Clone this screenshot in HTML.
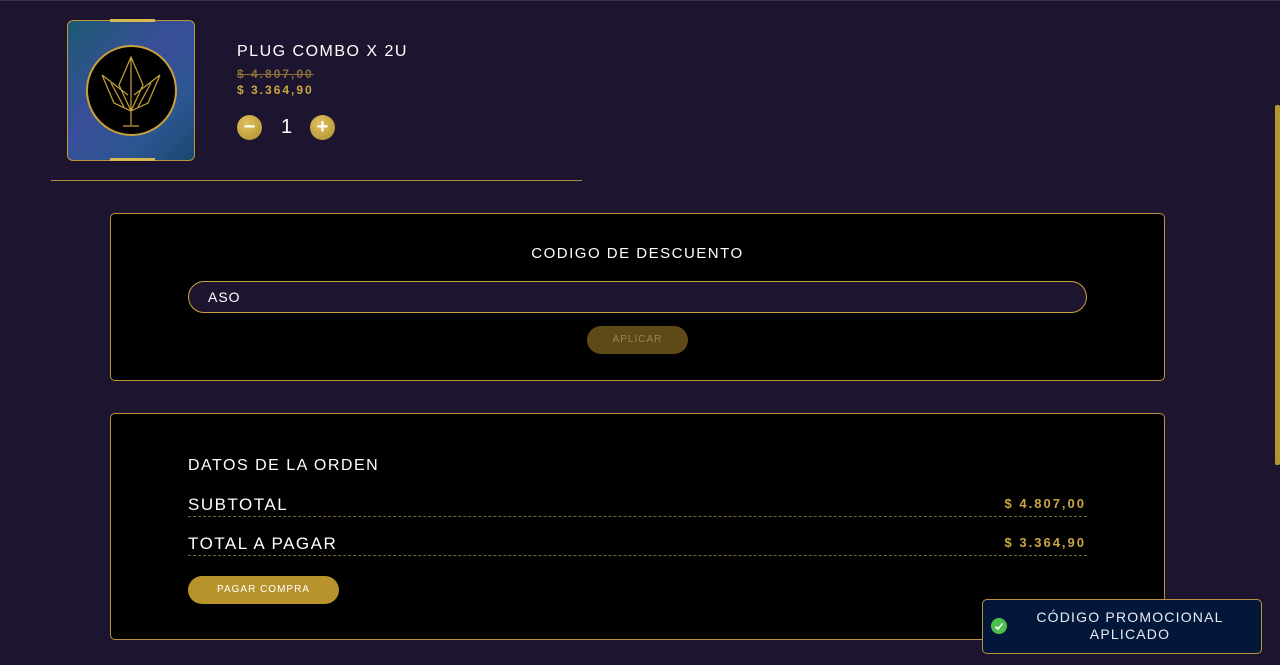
<!DOCTYPE html>
<html><head><meta charset="utf-8"><style>
*{box-sizing:border-box;margin:0;padding:0}
body{width:1280px;height:665px;overflow:hidden;background:#1d1530;font-family:"Liberation Sans",sans-serif;color:#fff;position:relative;letter-spacing:1px}
.abs{position:absolute}
.card{position:absolute;background:#000;border:1px solid #b8943a;border-radius:5px}
.gold{color:#c9a640}
</style></head><body>
<div class="abs" style="left:0;top:0;width:1280px;height:1px;background:#3a3350"></div>
<div class="abs" style="left:1275px;top:105px;width:5px;height:360px;background:#b8962f;border-radius:2px"></div>

<!-- product image -->
<div class="abs" style="left:67px;top:20px;width:128px;height:141px;border:1px solid #b8943a;border-radius:6px;background:linear-gradient(135deg,#1d5a73,#3a4e9a 45%,#2a5690 75%,#1a4670)"></div>
<div class="abs" style="left:110px;top:19px;width:45px;height:3px;background:#d8b850"></div>
<div class="abs" style="left:110px;top:158px;width:45px;height:3px;background:#d8b850"></div>
<div class="abs" style="left:86px;top:45px;width:91px;height:91px;border-radius:50%;background:#000;border:2px solid #c9a23a"></div>
<svg class="abs" style="left:86px;top:45px" width="91" height="91" viewBox="0 0 91 91" fill="none" stroke="#c9a23a" stroke-width="1.2">
<path d="M45 12 L33 40 L45 66 L57 40 Z M45 12 L45 66 M16 30 L28 58 L45 66 M74 30 L62 58 L45 66 M16 30 L42 50 M74 30 L48 50 M25 38 L38 62 M65 38 L52 62 M45 66 L45 80 M37 81 L53 81"/>
</svg>

<div class="abs" style="left:237px;top:43px;font-size:16px;letter-spacing:1.5px">PLUG COMBO X 2U</div>
<div class="abs gold" style="left:237px;top:67px;font-size:12px;font-weight:bold;text-decoration:line-through;color:#8a7038;letter-spacing:2px">$ 4.807,00</div>
<div class="abs gold" style="left:237px;top:83px;font-size:12px;font-weight:bold;letter-spacing:2px">$ 3.364,90</div>
<div class="abs" style="left:237px;top:115px;width:25px;height:25px;border-radius:50%;background:radial-gradient(circle at 40% 35%,#e0c060,#b08e2c);color:#fff;font-size:20px;line-height:24px;text-align:center;font-weight:bold;letter-spacing:0">−</div>
<div class="abs" style="left:281px;top:116px;font-size:20px">1</div>
<div class="abs" style="left:310px;top:115px;width:25px;height:25px;border-radius:50%;background:radial-gradient(circle at 40% 35%,#e0c060,#b08e2c);color:#fff;font-size:20px;line-height:24px;text-align:center;font-weight:bold;letter-spacing:0">+</div>
<div class="abs" style="left:51px;top:180px;width:531px;height:1px;background:#a88a4a"></div>

<!-- discount -->
<div class="card" style="left:110px;top:213px;width:1055px;height:168px"></div>
<div class="abs" style="left:110px;top:245px;width:1055px;text-align:center;font-size:15px;letter-spacing:1.5px">CODIGO DE DESCUENTO</div>
<div class="abs" style="left:188px;top:281px;width:899px;height:32px;border:1px solid #c9a23a;border-radius:16px;background:#1d1530;font-size:14px;padding:7px 19px">ASO</div>
<div class="abs" style="left:587px;top:326px;width:101px;height:28px;border-radius:14px;background:#5e4a17;color:#9a8452;font-size:10px;text-align:center;line-height:28px;letter-spacing:1px">APLICAR</div>

<!-- order data -->
<div class="card" style="left:110px;top:413px;width:1055px;height:227px"></div>
<div class="abs" style="left:188px;top:457px;font-size:16px;letter-spacing:1.5px">DATOS DE LA ORDEN</div>
<div class="abs" style="left:188px;top:495px;width:899px;height:22px;border-bottom:1px dashed #7a6530"></div>
<div class="abs" style="left:188px;top:495px;font-size:17px;letter-spacing:1.5px">SUBTOTAL</div>
<div class="abs gold" style="left:900px;top:496px;width:186px;text-align:right;font-size:13px;font-weight:bold;letter-spacing:2px">$ 4.807,00</div>
<div class="abs" style="left:188px;top:534px;width:899px;height:22px;border-bottom:1px dashed #7a6530"></div>
<div class="abs" style="left:188px;top:534px;font-size:17px;letter-spacing:1.5px">TOTAL A PAGAR</div>
<div class="abs gold" style="left:900px;top:535px;width:186px;text-align:right;font-size:13px;font-weight:bold;letter-spacing:2px">$ 3.364,90</div>
<div class="abs" style="left:188px;top:576px;width:151px;height:28px;border-radius:14px;background:#b8932c;color:#fff;font-size:10px;text-align:center;line-height:28px;letter-spacing:1px">PAGAR COMPRA</div>

<!-- toast -->
<div class="abs" style="left:982px;top:599px;width:280px;height:55px;background:#03173a;border:1px solid #b8943a;border-radius:5px"></div>
<div class="abs" style="left:991px;top:618px;width:16px;height:16px;border-radius:50%;background:#4cc04a"></div>
<svg class="abs" style="left:991px;top:618px" width="16" height="16"><path d="M4.5 8.5 L7 11 L11.5 5.5" stroke="#fff" stroke-width="1.6" fill="none"/></svg>
<div class="abs" style="left:1010px;top:609px;width:240px;text-align:center;font-size:14px;line-height:17px;letter-spacing:1.2px;color:#e8ecf4">CÓDIGO PROMOCIONAL<br>APLICADO</div>
</body></html>
